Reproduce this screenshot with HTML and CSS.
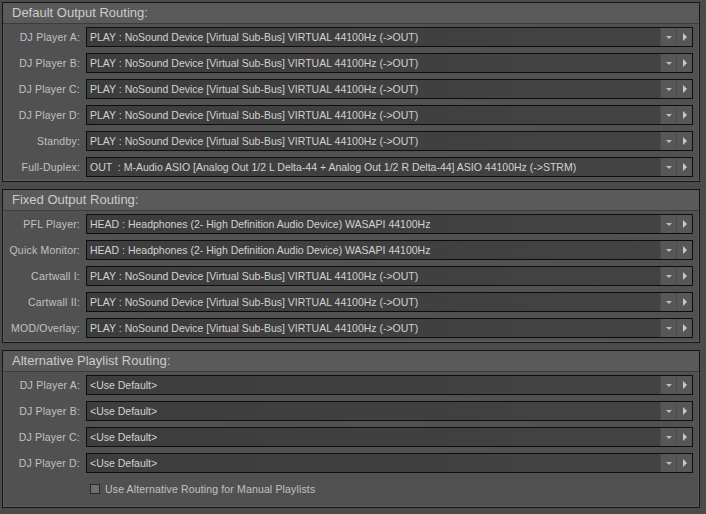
FILE: index.html
```html
<!DOCTYPE html>
<html lang="en">

<head>
    <meta charset="UTF-8">
    <title>Output Routing</title>
    <link rel="stylesheet" href="styles.css">
</head>

<body>
    <div class="routing">
        <section class="group">
            <h2 class="group-title">Default Output Routing:</h2>
            <div class="row">
                <label>DJ Player A:</label>
                <div class="combo"><span class="value">PLAY : NoSound Device [Virtual Sub-Bus] VIRTUAL 44100Hz (-&gt;OUT)</span><span class="drop"></span><span class="go"></span></div>
            </div>
            <div class="row">
                <label>DJ Player B:</label>
                <div class="combo"><span class="value">PLAY : NoSound Device [Virtual Sub-Bus] VIRTUAL 44100Hz (-&gt;OUT)</span><span class="drop"></span><span class="go"></span></div>
            </div>
            <div class="row">
                <label>DJ Player C:</label>
                <div class="combo"><span class="value">PLAY : NoSound Device [Virtual Sub-Bus] VIRTUAL 44100Hz (-&gt;OUT)</span><span class="drop"></span><span class="go"></span></div>
            </div>
            <div class="row">
                <label>DJ Player D:</label>
                <div class="combo"><span class="value">PLAY : NoSound Device [Virtual Sub-Bus] VIRTUAL 44100Hz (-&gt;OUT)</span><span class="drop"></span><span class="go"></span></div>
            </div>
            <div class="row">
                <label>Standby:</label>
                <div class="combo"><span class="value">PLAY : NoSound Device [Virtual Sub-Bus] VIRTUAL 44100Hz (-&gt;OUT)</span><span class="drop"></span><span class="go"></span></div>
            </div>
            <div class="row">
                <label>Full-Duplex:</label>
                <div class="combo"><span class="value">OUT &nbsp;: M-Audio ASIO [Analog Out 1/2 L Delta-44 + Analog Out 1/2 R Delta-44] ASIO 44100Hz (-&gt;STRM)</span><span class="drop"></span><span class="go"></span></div>
            </div>
        </section>

        <section class="group">
            <h2 class="group-title">Fixed Output Routing:</h2>
            <div class="row">
                <label>PFL Player:</label>
                <div class="combo"><span class="value">HEAD : Headphones (2- High Definition Audio Device) WASAPI 44100Hz</span><span class="drop"></span><span class="go"></span></div>
            </div>
            <div class="row">
                <label>Quick Monitor:</label>
                <div class="combo"><span class="value">HEAD : Headphones (2- High Definition Audio Device) WASAPI 44100Hz</span><span class="drop"></span><span class="go"></span></div>
            </div>
            <div class="row">
                <label>Cartwall I:</label>
                <div class="combo"><span class="value">PLAY : NoSound Device [Virtual Sub-Bus] VIRTUAL 44100Hz (-&gt;OUT)</span><span class="drop"></span><span class="go"></span></div>
            </div>
            <div class="row">
                <label>Cartwall II:</label>
                <div class="combo"><span class="value">PLAY : NoSound Device [Virtual Sub-Bus] VIRTUAL 44100Hz (-&gt;OUT)</span><span class="drop"></span><span class="go"></span></div>
            </div>
            <div class="row">
                <label>MOD/Overlay:</label>
                <div class="combo"><span class="value">PLAY : NoSound Device [Virtual Sub-Bus] VIRTUAL 44100Hz (-&gt;OUT)</span><span class="drop"></span><span class="go"></span></div>
            </div>
        </section>

        <section class="group">
            <h2 class="group-title">Alternative Playlist Routing:</h2>
            <div class="row">
                <label>DJ Player A:</label>
                <div class="combo"><span class="value">&lt;Use Default&gt;</span><span class="drop"></span><span class="go"></span></div>
            </div>
            <div class="row">
                <label>DJ Player B:</label>
                <div class="combo"><span class="value">&lt;Use Default&gt;</span><span class="drop"></span><span class="go"></span></div>
            </div>
            <div class="row">
                <label>DJ Player C:</label>
                <div class="combo"><span class="value">&lt;Use Default&gt;</span><span class="drop"></span><span class="go"></span></div>
            </div>
            <div class="row">
                <label>DJ Player D:</label>
                <div class="combo"><span class="value">&lt;Use Default&gt;</span><span class="drop"></span><span class="go"></span></div>
            </div>
            <div class="check-row">
                <span class="box"></span>
                <span>Use Alternative Routing for Manual Playlists</span>
            </div>
        </section>
    </div>
</body>

</html>
```

FILE: styles.css
```css
body {
    margin: 0;
    background-color: #4b4b4b;
    font-family: Tahoma, "Liberation Sans", Arial, sans-serif;
    font-size: 10.5px;
    color: #c4c4c4;
}

.routing {
    width: 698px;
    padding: 2px 0 0 2px;
    display: flex;
    flex-direction: column;
    gap: 7px;
}

.group {
    background-color: #515151;
    border: 1px solid #151515;
    box-shadow: inset 1px 1px 0 #5e5e5e, inset -1px -1px 0 #5e5e5e;
    padding-bottom: 1px;
}

.group-title {
    margin: 0;
    height: 20px;
    line-height: 20px;
    padding-left: 9px;
    font-size: 13px;
    font-weight: normal;
    color: #cccccc;
    background-color: #5a5a5a;
    border-bottom: 1px solid #3c3c3c;
}

.row {
    height: 26px;
    display: flex;
    align-items: center;
}

.row label {
    width: 77px;
    margin-right: 6px;
    text-align: right;
    letter-spacing: 0.2px;
    color: #c2c2c2;
}

.combo {
    width: 605px;
    height: 18px;
    display: flex;
    align-items: stretch;
    border: 1px solid #0e0e0e;
    background: linear-gradient(90deg, #3d3d3d, #434343);
}

.combo .value {
    flex: 1;
    line-height: 18px;
    padding-left: 3px;
    color: #d2d2d2;
    white-space: nowrap;
    overflow: hidden;
}

.combo .drop,
.combo .go {
    width: 15px;
    position: relative;
    background-color: #575757;
    border-left: 1px solid #4c4c4c;
}

/* little arrow glyphs on the two buttons */
.combo .drop::after {
    content: "";
    position: absolute;
    left: 5px;
    top: 8px;
    border-left: 3px solid transparent;
    border-right: 3px solid transparent;
    border-top: 3px solid #bdbdbd;
}

.combo .go::after {
    content: "";
    position: absolute;
    left: 6px;
    top: 5px;
    border-top: 4px solid transparent;
    border-bottom: 4px solid transparent;
    border-left: 4px solid #c8c8c8;
}

.check-row {
    height: 26px;
    display: flex;
    align-items: center;
    padding-left: 87px;
    padding-bottom: 4px;
    gap: 5px;
    letter-spacing: 0.15px;
    color: #c2c2c2;
}

.check-row .box {
    width: 8px;
    height: 8px;
    background-color: #6e6e6e;
    border: 1px solid #2a2a2a;
}
```
